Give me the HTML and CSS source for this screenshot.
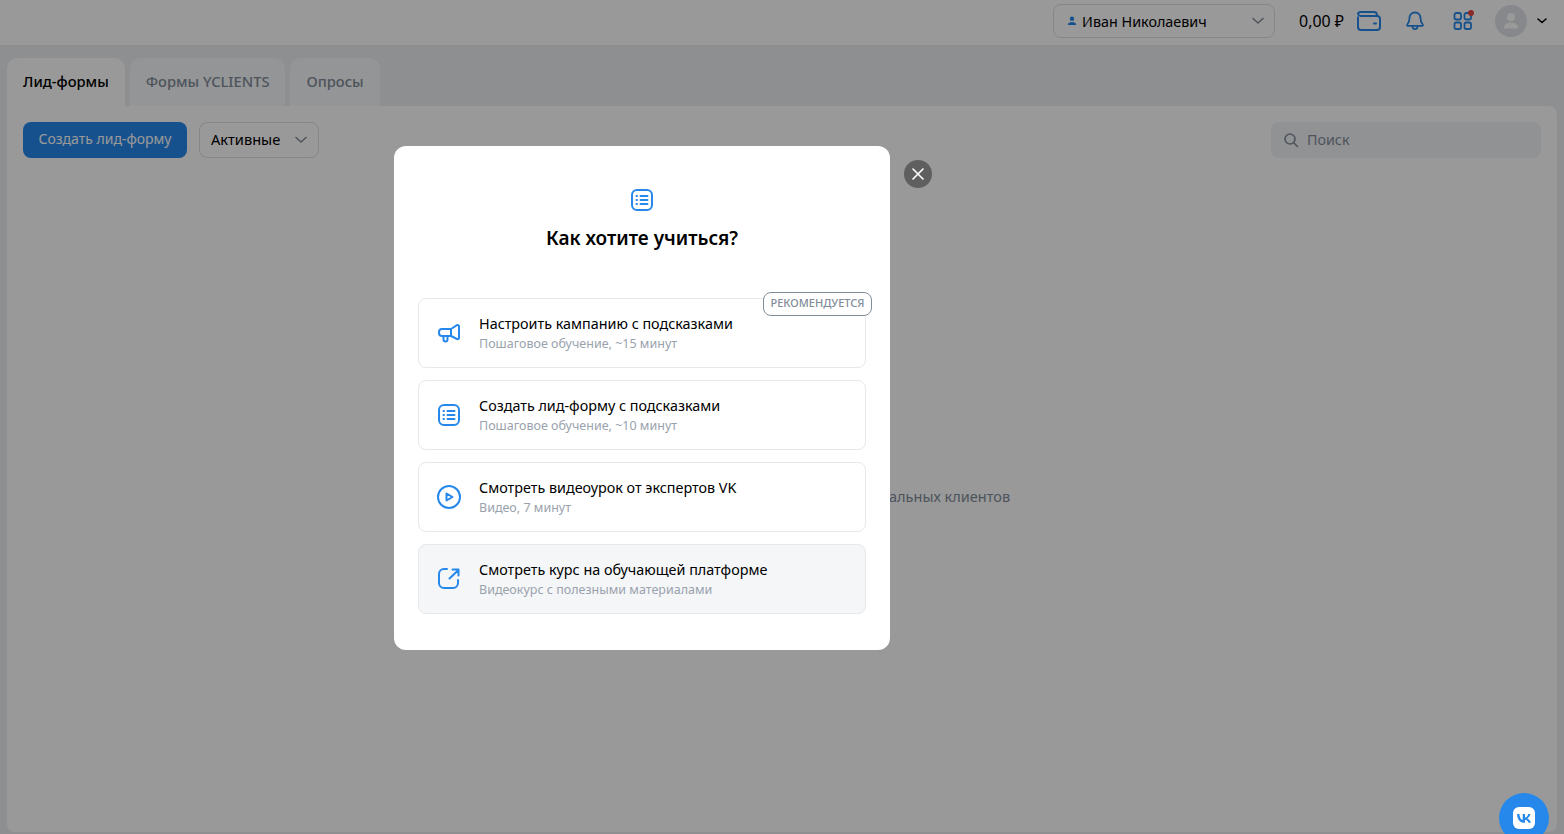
FILE: index.html
```html
<!DOCTYPE html>
<html lang="ru">
<head>
<meta charset="utf-8">
<title>Лид-формы</title>
<link rel="stylesheet" href="styles.css">
</head>
<body>
<div class="page">
  <header class="topbar">
    <div class="account">
      <svg class="account-icon" width="10" height="10" viewBox="0 0 10 10"><circle cx="5" cy="2.800" r="2.200" fill="#2688eb"/><path d="M.8 9c0-2.200 2-3 4.200-3s4.200.8 4.200 3z" fill="#2688eb"/></svg>
      <span class="account-name">Иван Николаевич</span>
      <svg class="chev" width="12" height="8" viewBox="0 0 12 8"><path d="M1 1.500l5 4.500 5-4.500" fill="none" stroke="#818c99" stroke-width="1.500" stroke-linecap="round" stroke-linejoin="round"/></svg>
    </div>
    <span class="balance">0,00 ₽</span>
    <svg class="ic-wallet" width="24" height="20" viewBox="0 0 24 20" fill="none" stroke="#2688eb" stroke-width="2"><path d="M1 5.500V16a3 3 0 0 0 3 3h16a3 3 0 0 0 3-3V8a3 3 0 0 0-3-3H4a3 3 0 0 1-3-2v0a2.500 2.500 0 0 1 2.500-2H17a3 3 0 0 1 3 3v1"/><path d="M17 12.500h2" stroke-linecap="round"/></svg>
    <svg class="ic-bell" width="20" height="20" viewBox="0 0 20 20" fill="none" stroke="#2688eb" stroke-width="1.800" stroke-linejoin="round"><path d="M10 1.500c-3.400 0-5.500 2.600-5.500 5.700 0 3.300-.8 4.800-2.200 6.300-.5.600-.2 1.300.6 1.300h14.200c.8 0 1.100-.7.600-1.300-1.400-1.500-2.200-3-2.200-6.300 0-3.100-2.100-5.700-5.500-5.700z"/><path d="M7.500 15c0 2 1 3.200 2.500 3.200s2.500-1.200 2.500-3.200"/></svg>
    <div class="apps">
      <svg width="20" height="20" viewBox="0 0 20 20" fill="none" stroke="#2688eb" stroke-width="1.800"><rect x="1.500" y="2" width="6.500" height="6.500" rx="1.800"/><rect x="11.500" y="2" width="6.500" height="6.500" rx="1.800"/><rect x="1.500" y="11.500" width="6.500" height="6.500" rx="1.800"/><rect x="11.500" y="11.500" width="6.500" height="6.500" rx="1.800"/></svg>
      <span class="apps-dot"></span>
    </div>
    <div class="avatar">
      <svg width="32" height="32" viewBox="0 0 32 32"><circle cx="16" cy="16" r="16" fill="#e1e3e9"/><circle cx="16" cy="12" r="4" fill="#fff"/><path d="M9 22.500c0-3.500 3.500-5 7-5s7 1.500 7 5c0 .6-.5 1-1 1H10c-.5 0-1-.4-1-1z" fill="#fff"/></svg>
    </div>
    <svg class="avatar-chev" width="10" height="6" viewBox="0 0 10 6"><path d="M1 1l4 3.500L9 1" fill="none" stroke="#000" stroke-width="1.600" stroke-linecap="round" stroke-linejoin="round"/></svg>
  </header>

  <main class="content">
    <nav class="tabs">
      <div class="tab tab-active">Лид-формы</div>
      <div class="tab">Формы YCLIENTS</div>
      <div class="tab">Опросы</div>
    </nav>
    <section class="panel">
      <div class="toolbar">
        <button class="primary">Создать лид-форму</button>
        <div class="select">
          <span>Активные</span>
          <svg width="12" height="8" viewBox="0 0 12 8"><path d="M1 1.500l5 4.500 5-4.500" fill="none" stroke="#818c99" stroke-width="1.500" stroke-linecap="round" stroke-linejoin="round"/></svg>
        </div>
        <div class="search">
          <svg width="16" height="16" viewBox="0 0 16 16" fill="none" stroke="#818c99" stroke-width="1.600"><circle cx="7" cy="7" r="5"/><path d="M11 11l3.500 3.500" stroke-linecap="round"/></svg>
          <span>Поиск</span>
        </div>
      </div>
      <div class="empty">
        <p class="empty-text">Лид-формы помогают собирать контакты потенциальных клиентов</p>
      </div>
    </section>
  </main>
</div>

<div class="overlay">
  <div class="modal-wrap">
    <div class="modal">
      <svg class="modal-icon" width="24" height="24" viewBox="0 0 24 24" fill="none" stroke="#2688eb"><rect x="2" y="2" width="20" height="20" rx="5" stroke-width="2"/><path d="M10.500 8h7M10.500 12h7M10.500 16h7" stroke-width="2" stroke-linecap="round"/><path d="M6.500 8h.5M6.500 12h.5M6.500 16h.5" stroke-width="2" stroke-linecap="round"/></svg>
      <h2 class="modal-title">Как хотите учиться?</h2>
      <div class="options">
        <div class="option">
          <svg class="opt-icon" width="24" height="24" viewBox="0 0 24 24" fill="none" stroke="#2688eb" stroke-width="2" stroke-linejoin="round" stroke-linecap="round"><path d="M14 8H5a3 3 0 0 0-3 3v1a3 3 0 0 0 3 3h9z"/><path d="M14 8l6-3.800c.7-.4 2 0 2 1V17c0 1-1.300 1.400-2 1l-6-3"/><path d="M6.500 15v3.500a2 2 0 0 0 4 0V15"/></svg>
          <div class="opt-text">
            <div class="opt-title">Настроить кампанию с подсказками</div>
            <div class="opt-sub">Пошаговое обучение, ~15 минут</div>
          </div>
          <span class="badge">РЕКОМЕНДУЕТСЯ</span>
        </div>
        <div class="option">
          <svg class="opt-icon" width="24" height="24" viewBox="0 0 24 24" fill="none" stroke="#2688eb"><rect x="2" y="2" width="20" height="20" rx="5" stroke-width="2"/><path d="M10.500 8h7M10.500 12h7M10.500 16h7" stroke-width="2" stroke-linecap="round"/><path d="M6.500 8h.5M6.500 12h.5M6.500 16h.5" stroke-width="2" stroke-linecap="round"/></svg>
          <div class="opt-text">
            <div class="opt-title">Создать лид-форму с подсказками</div>
            <div class="opt-sub">Пошаговое обучение, ~10 минут</div>
          </div>
        </div>
        <div class="option">
          <svg class="opt-icon" width="24" height="24" viewBox="0 0 24 24" fill="none" stroke="#2688eb" stroke-width="2" stroke-linejoin="round"><circle cx="12" cy="12" r="11"/><path d="M9.500 8.500v7l6-3.500z"/></svg>
          <div class="opt-text">
            <div class="opt-title">Смотреть видеоурок от экспертов VK</div>
            <div class="opt-sub">Видео, 7 минут</div>
          </div>
        </div>
        <div class="option option-hover">
          <svg class="opt-icon" width="24" height="24" viewBox="0 0 24 24" fill="none" stroke="#2688eb" stroke-width="2" stroke-linecap="round" stroke-linejoin="round"><path d="M10 2H7a5 5 0 0 0-5 5v9a5 5 0 0 0 5 5h9a5 5 0 0 0 5-5v-3"/><path d="M12.500 11.500L21.500 3M15.500 2.500h6v6"/></svg>
          <div class="opt-text">
            <div class="opt-title">Смотреть курс на обучающей платформе</div>
            <div class="opt-sub">Видеокурс с полезными материалами</div>
          </div>
        </div>
      </div>
    </div>
    <div class="close">
      <svg width="12" height="12" viewBox="0 0 12 12"><path d="M1 1l10 10M11 1L1 11" stroke="#fff" stroke-width="1.600" stroke-linecap="round"/></svg>
    </div>
  </div>
</div>

<div class="vk-fab">
  <svg width="22" height="22" viewBox="0 0 22 22"><rect width="22" height="22" rx="6" fill="#fff"/><path d="M11.700 15.800C6.900 15.800 4.200 12.500 4.100 7h2.400c.1 4 1.800 5.700 3.200 6V7h2.300v3.500c1.400-.1 2.800-1.700 3.300-3.500h2.200c-.4 2.200-2 3.800-3.200 4.500 1.200.6 3 2 3.700 4.300h-2.500c-.5-1.600-1.800-2.900-3.500-3v3z" fill="#2688eb"/></svg>
</div>
</body>
</html>
```
FILE: styles.css
```css
* { box-sizing: border-box; }
html, body { margin: 0; height: 100%; overflow: hidden; }
body {
  font-family: "Noto Sans", "Open Sans", sans-serif;
  color: #000;
  background: #eceef2;
}
.page { display: flex; flex-direction: column; height: 834px; }

.topbar {
  height: 46px;
  flex: none;
  background: #fff;
  border-bottom: 1px solid #e7e8ec;
  display: flex;
  align-items: center;
  justify-content: flex-end;
  padding: 0 17px 3px 0;
}
.account {
  width: 222px;
  height: 34px;
  border: 1px solid #dce1e6;
  border-radius: 8px;
  display: flex;
  align-items: center;
  padding: 0 10px 0 13px;
  margin-right: 24px;
}
.account-icon { margin-right: 5px; width: 10px; height: 10px; }
.account-name { font-size: 14.350px; flex: 1; }
.balance { font-size: 15.900px; margin-right: 13px; }
.ic-wallet { margin-right: 24px; }
.ic-bell { margin-right: 28px; }
.apps { position: relative; width: 20px; height: 20px; margin-right: 22px; }
.apps svg { display: block; }
.apps-dot {
  position: absolute;
  top: -1px;
  right: -1px;
  width: 6px;
  height: 6px;
  border-radius: 50%;
  background: #e64646;
}
.avatar { width: 32px; height: 32px; margin-right: 10px; }
.avatar svg { display: block; }

.content { flex: 1; display: flex; flex-direction: column; padding: 12px 7px 2px; }
.tabs { display: flex; height: 48px; flex: none; }
.tab {
  height: 48px;
  padding: 0 16px;
  margin-right: 5px;
  border-radius: 10px 10px 0 0;
  background: #f7f8fa;
  color: #818c99;
  font-size: 14.700px;
  font-weight: 500;
  line-height: 46px;
}
.tab-active { background: #fff; color: #000; }

.panel {
  flex: 1;
  background: #fff;
  border-radius: 0 8px 8px 8px;
  padding: 16px;
  display: flex;
  flex-direction: column;
}
.toolbar { display: flex; align-items: center; }
.primary {
  width: 164px;
  height: 36px;
  border: 0;
  border-radius: 8px;
  background: #2688eb;
  color: #fff;
  padding: 0 0 4px;
  font: 400 14px "Noto Sans", sans-serif;
}
.select {
  width: 120px;
  height: 36px;
  margin-left: 12px;
  border: 1px solid #dce1e6;
  border-radius: 8px;
  display: flex;
  align-items: center;
  justify-content: space-between;
  padding: 0 11px 3px 11px;
  font-size: 14.600px;
}
.select svg { margin-top: 3px; }
.search {
  width: 270px;
  height: 36px;
  margin-left: auto;
  border-radius: 8px;
  background: #f2f3f5;
  display: flex;
  align-items: center;
  gap: 8px;
  padding: 0 12px 1px;
  color: #818c99;
  font-size: 14.300px;
}
.search svg { flex: none; }
.empty {
  padding-top: 328px;
  text-align: center;
  margin-right: 21px;
}
.empty-text { margin: 0; font-size: 14.500px; line-height: 20px; color: #818c99; }

.overlay {
  position: fixed;
  inset: 0;
  background: rgba(0, 0, 0, .4);
  display: flex;
  justify-content: flex-start;
  align-items: flex-start;
  padding: 146px 0 0 394px;
}
.modal-wrap { position: relative; }
.modal {
  width: 496px;
  height: 504px;
  background: #fff;
  border-radius: 12px;
  padding: 42px 24px 0;
  display: flex;
  flex-direction: column;
  align-items: center;
}
.modal-icon { display: block; flex: none; }
.modal-title {
  margin: 13px 0 0;
  font-size: 19px;
  line-height: 26px;
  font-weight: 600;
  text-align: center;
}
.options { width: 100%; margin-top: 47px; display: flex; flex-direction: column; gap: 12px; }
.option {
  position: relative;
  height: 70px;
  border: 1px solid #e7e8ec;
  border-radius: 8px;
  display: flex;
  align-items: center;
  padding: 0 0 0 18px;
}
.option-hover { background: #f5f6f8; }
.opt-icon { flex: none; margin-right: 18px; }
.opt-title { font-size: 14.350px; line-height: 20px; color: #000; }
.opt-sub { font-size: 12.500px; line-height: 16px; margin-top: 2px; color: #99a2ad; }
.badge {
  position: absolute;
  top: -7px;
  right: -7px;
  height: 24px;
  padding: 0 6.500px;
  border: 1px solid #818c99;
  border-radius: 8px;
  background: #fff;
  color: #818c99;
  font-size: 11px;
  font-weight: 500;
  line-height: 20px;
}
.close {
  position: absolute;
  left: 510px;
  top: 14px;
  width: 28px;
  height: 28px;
  border-radius: 50%;
  background: #5f5f5f;
  display: flex;
  align-items: center;
  justify-content: center;
}
.vk-fab {
  position: fixed;
  left: 1499px;
  top: 793px;
  width: 50px;
  height: 50px;
  border-radius: 50%;
  background: #2688eb;
  display: flex;
  align-items: center;
  justify-content: center;
}
```
